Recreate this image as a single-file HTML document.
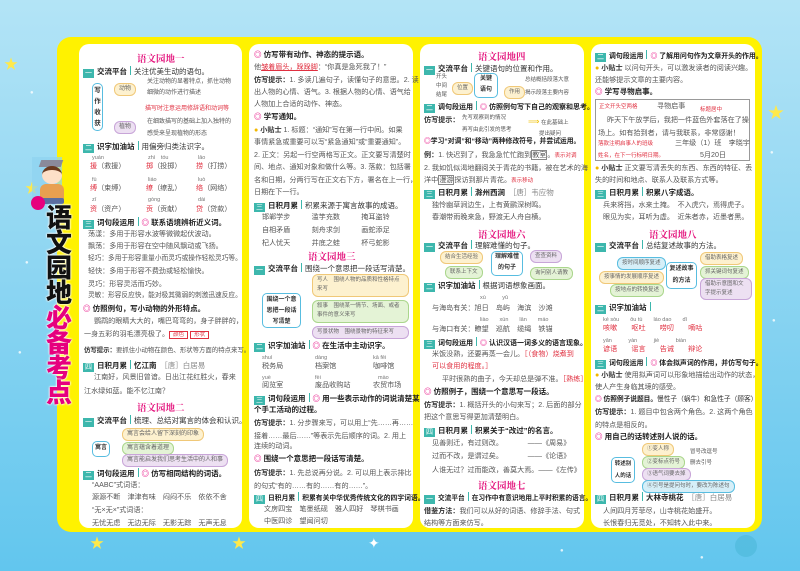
<!DOCTYPE html>
<html><head><meta charset="utf-8">
<style>
*{margin:0;padding:0;box-sizing:border-box}
body{width:800px;height:571px;overflow:hidden;position:relative;font-family:"Liberation Sans","Noto Sans CJK SC",sans-serif;background:linear-gradient(180deg,#b3e4f6 0%,#8fd6f2 45%,#62c6ee 100%)}
.frame{position:absolute;left:57px;top:37px;width:705px;height:495px;background:#fff200;border-radius:14px}
.col{position:absolute;top:44px;height:484px;background:#fff;border-radius:10px}
.l{position:absolute;white-space:nowrap;font-size:7.1px;line-height:10px;color:#555}
.h{position:absolute;white-space:nowrap;font-size:7.5px;line-height:10px;color:#333}
.h b{font-weight:bold;color:#222}
.h .n{display:inline-block;width:11px;height:9px;background:#3db7ad;color:#fff;font-size:7px;line-height:9px;text-align:center;margin-right:3px;vertical-align:-1px}
.h .s{display:inline-block;width:1px;height:9px;background:#3db7ad;margin:0 3px;vertical-align:-1px}
.t{position:absolute;font-family:"Noto Serif CJK SC","Liberation Serif",serif;font-weight:bold;font-size:9.5px;color:#e4147d;white-space:nowrap}
.c{color:#e6007e}
.r{color:#e03040}
.p{font-size:5.5px;color:#777}
.bx{position:absolute;border-radius:6px;font-size:6px;line-height:9px;color:#666;padding:1px 4px;white-space:nowrap}
.y{background:#fdf1cf;border:1px solid #f0c878}
.g{background:#e4f3d6;border:1px solid #aad68c}
.v{background:#ede0f2;border:1px solid #c8a5d8}
.u{background:#d6eff8;border:1px solid #58bde0}
.cb{position:absolute;border:1.5px solid #58bde0;border-radius:5px;background:#fff;font-size:7px;color:#333;text-align:center;font-weight:bold}
.bulb{color:#f3b800}
.big{position:absolute;left:44px;font-size:26px;line-height:25px;font-weight:900;width:30px;text-align:center;text-shadow:0 0 2px #fff,0 0 2px #fff,0 0 1px #fff}
.star{position:absolute;color:#ffe94a;font-size:14px}
.dot{position:absolute;color:#fff;opacity:.8;font-size:6px}
</style></head><body>
<span class="star" style="left:4px;top:54px">★</span>
<span class="star" style="left:25px;top:178px">★</span>
<span class="star" style="left:90px;top:533px">★</span>
<span class="star" style="left:232px;top:533px">★</span>
<span class="star" style="left:368px;top:535px;color:#fff">✦</span>
<span class="star" style="left:768px;top:99px;font-size:16px">★</span>
<span class="dot" style="left:30px;top:90px">●</span><span class="dot" style="left:25px;top:260px">●</span><span class="dot" style="left:18px;top:350px">●</span><span class="dot" style="left:770px;top:150px">●</span><span class="dot" style="left:772px;top:318px">●</span><span class="dot" style="left:560px;top:548px">●</span><span class="dot" style="left:700px;top:555px">●</span>
<div style="position:absolute;left:735px;top:535px;width:22px;height:22px;border-radius:50%;background:#4bb8d8;opacity:.6"></div>

<div class="frame"></div>
<div style="position:absolute;left:32px;top:157px;width:30px;height:48px;background:#8ed3f0;opacity:.7"></div>
<div style="position:absolute;left:40px;top:160px;width:22px;height:7px;background:#8a8a9a;transform:skewX(-20deg)"></div>
<div style="position:absolute;left:42px;top:166px;width:20px;height:18px;border-radius:50%;background:#fde0c8;border-top:4px solid #6b3a1e"></div>
<div style="position:absolute;left:40px;top:184px;width:24px;height:16px;border-radius:6px 6px 2px 2px;background:#e8a050"></div>
<div style="position:absolute;left:42px;top:198px;width:22px;height:6px;background:#5a6ea0;border-radius:2px"></div>
<div style="position:absolute;left:31px;top:196px;width:14px;height:14px;border-radius:50%;background:#e6007e"></div>
<div class="big" style="top:206px;color:#111">语<br>文<br>园<br>地<br><span style="color:#e6007e">必<br>备<br>考<br>点</span></div>

<div class="col" style="left:79px;width:163px"></div>
<div class="col" style="left:249px;width:164px"></div>
<div class="col" style="left:420px;width:164px"></div>
<div class="col" style="left:591px;width:164px"></div>

<!-- COLUMN 1 -->
<div class="t" style="left:137px;top:51px">语文园地一</div>
<div class="h" style="left:83px;top:66px"><span class="n">一</span><b>交流平台</b><span class="s"></span>关注优美生动的语句。</div>
<div class="cb" style="left:92px;top:83px;width:11px;height:48px;font-size:6.5px;line-height:11px;padding-top:1px">写<br>作<br>收<br>获</div>
<div class="bx y" style="left:114px;top:83px">动物</div>
<div class="bx v" style="left:114px;top:121px">植物</div>
<div class="l" style="left:147px;top:77px;font-size:6px">关注动物的显著特点，抓住动物</div>
<div class="l" style="left:147px;top:88px;font-size:6px">细微的动作进行描述</div>
<div class="l r" style="left:145px;top:104px;font-size:6px">描写时注意运用修辞语和动词等</div>
<div class="l" style="left:147px;top:117px;font-size:6px">在细致描写的基础上加入独特的</div>
<div class="l" style="left:147px;top:129px;font-size:6px">感受来呈现植物的形态</div>
<div class="h" style="left:83px;top:141px"><span class="n">二</span><b>识字加油站</b><span class="s"></span>用偏旁归类法识字。</div>
<div class="l p" style="left:92px;top:153px">yuán</div><div class="l p" style="left:148px;top:153px">zhì　tóu</div><div class="l p" style="left:198px;top:153px">lāo</div>
<div class="l" style="left:90px;top:161px"><span class="r">援</span>（救援）</div><div class="l" style="left:146px;top:161px"><span class="r">掷</span>（投掷）</div><div class="l" style="left:196px;top:161px"><span class="r">捞</span>（打捞）</div>
<div class="l p" style="left:92px;top:175px">fù</div><div class="l p" style="left:148px;top:175px">liáo</div><div class="l p" style="left:198px;top:175px">luò</div>
<div class="l" style="left:90px;top:183px"><span class="r">缚</span>（束缚）</div><div class="l" style="left:146px;top:183px"><span class="r">缭</span>（缭乱）</div><div class="l" style="left:196px;top:183px"><span class="r">络</span>（网络）</div>
<div class="l p" style="left:92px;top:195px">zī</div><div class="l p" style="left:148px;top:195px">gòng</div><div class="l p" style="left:198px;top:195px">dài</div>
<div class="l" style="left:90px;top:204px"><span class="r">资</span>（资产）</div><div class="l" style="left:146px;top:204px"><span class="r">贡</span>（贡献）</div><div class="l" style="left:196px;top:204px"><span class="r">贷</span>（贷款）</div>
<div class="h" style="left:83px;top:217px"><span class="n">三</span><b>词句段运用</b><span class="s"></span><b><span class="c">◎</span> 联系语境辨析近义词。</b></div>
<div class="l" style="left:88px;top:229px">荡漾：多用于形容水波等微微起伏波动。</div>
<div class="l" style="left:88px;top:241px">飘荡：多用于形容在空中随风飘动或飞扬。</div>
<div class="l" style="left:88px;top:254px;font-size:6.7px">轻巧：多用于形容重量小而灵巧或操作轻松灵巧等。</div>
<div class="l" style="left:88px;top:266px">轻快：多用于形容不费劲或轻松愉快。</div>
<div class="l" style="left:88px;top:279px">灵巧：形容灵活而巧妙。</div>
<div class="l" style="left:88px;top:291px;font-size:6.7px">灵敏：形容反应快，能对极其微弱的刺激迅速反应。</div>
<div class="h" style="left:83px;top:304px"><b><span class="c">◎</span> 仿照例句，写小动物的外形特点。</b></div>
<div class="l" style="left:94px;top:316px">鹦鹉的眼睛大大的，嘴巴弯弯的，身子胖胖的，</div>
<div class="l" style="left:84px;top:329px">一身五彩的羽毛漂亮极了。<span class="r" style="border:1px solid #e03040;font-size:5.5px;padding:0 3px">颜色</span> <span class="r" style="border:1px solid #e03040;font-size:5.5px;padding:0 3px">形状</span></div>
<div class="l" style="left:84px;top:346px;font-size:6.4px"><b style="color:#333">仿写提示：</b>要抓住小动物在颜色、形状等方面的特点来写。</div>
<div class="h" style="left:83px;top:360px"><span class="n">四</span><b>日积月累</b><span class="s"></span><b>忆江南</b>　<span style="color:#888">［唐］白居易</span></div>
<div class="l" style="left:94px;top:372px">江南好，风景旧曾谙。日出江花红胜火，春来</div>
<div class="l" style="left:84px;top:386px">江水绿如蓝。能不忆江南？</div>
<div class="t" style="left:137px;top:400px">语文园地二</div>
<div class="h" style="left:83px;top:415px"><span class="n">一</span><b>交流平台</b><span class="s"></span>梳理、总结对寓言的体会和认识。</div>
<div class="cb" style="left:92px;top:441px;width:18px;height:16px;font-size:6px;line-height:13px">寓言</div>
<div class="bx y" style="left:122px;top:428px">寓言会给人留下深刻的印象</div>
<div class="bx g" style="left:122px;top:442px">寓言蕴含着道理</div>
<div class="bx v" style="left:122px;top:454px">寓言能启发我们思考生活中的人和事</div>
<div class="h" style="left:83px;top:468px"><span class="n">二</span><b>词句段运用</b><span class="s"></span><b><span class="c">◎</span> 仿写相同结构的词语。</b></div>
<div class="l" style="left:92px;top:480px">“AABC”式词语：</div>
<div class="l" style="left:92px;top:492px">源源不断　津津有味　闷闷不乐　依依不舍</div>
<div class="l" style="left:92px;top:505px">“无×无×”式词语：</div>
<div class="l" style="left:92px;top:518px">无忧无虑　无边无际　无影无踪　无声无息</div>

<!-- COLUMN 2 -->
<div class="h" style="left:254px;top:50px"><b><span class="c">◎</span> 仿写带有动作、神态的提示语。</b></div>
<div class="l" style="left:254px;top:62px">他<span class="r" style="text-decoration:underline">皱着眉头，跺跺脚</span>：“你真是急死我了！”</div>
<div class="l" style="left:254px;top:75px"><b style="color:#333">仿写提示：</b>1. 多读几遍句子，读懂句子的意思。2. 读</div>
<div class="l" style="left:254px;top:87px">出人物的心情、语气。3. 根据人物的心情、语气给</div>
<div class="l" style="left:254px;top:99px">人物加上合适的动作、神态。</div>
<div class="h" style="left:254px;top:112px"><b><span class="c">◎</span> 学写通知。</b></div>
<div class="l" style="left:254px;top:125px"><span class="bulb">●</span> <b style="color:#333">小贴士</b> 1. 标题：“通知”写在第一行中间。如果</div>
<div class="l" style="left:254px;top:137px">事情紧急或重要可以写“紧急通知”或“重要通知”。</div>
<div class="l" style="left:254px;top:150px">2. 正文：另起一行空两格写正文。正文要写清楚时</div>
<div class="l" style="left:254px;top:162px">间、地点、通知对象和做什么等。3. 落款：包括署</div>
<div class="l" style="left:254px;top:175px">名和日期，分两行写在正文右下方，署名在上一行，</div>
<div class="l" style="left:254px;top:187px">日期在下一行。</div>
<div class="h" style="left:254px;top:200px"><span class="n">三</span><b>日积月累</b><span class="s"></span>积累来源于寓言故事的成语。</div>
<div class="l" style="left:262px;top:212px">邯郸学步　　　滥竽充数　　　掩耳盗铃</div>
<div class="l" style="left:262px;top:225px">自相矛盾　　　刻舟求剑　　　画蛇添足</div>
<div class="l" style="left:262px;top:238px">杞人忧天　　　井底之蛙　　　杯弓蛇影</div>
<div class="t" style="left:308px;top:249px">语文园地三</div>
<div class="h" style="left:254px;top:263px"><span class="n">一</span><b>交流平台</b><span class="s"></span>围绕一个意思把一段话写清楚。</div>
<div class="cb" style="left:262px;top:293px;width:39px;height:35px;font-size:6px;line-height:11px;padding-top:1px">围绕一个意<br>思把一段话<br>写清楚</div>
<div class="bx y" style="left:312px;top:274px;width:97px;height:23px;white-space:normal;font-size:5.5px">写人　围绕人物的品质和性格特点来写</div>
<div class="bx g" style="left:312px;top:300px;width:97px;height:23px;white-space:normal;font-size:5.5px">叙事　围绕某一情节、场面、或者事件的意义来写</div>
<div class="bx v" style="left:312px;top:326px;width:97px;font-size:5.5px">写景状物　围绕景物的特征来写</div>
<div class="h" style="left:254px;top:340px"><span class="n">二</span><b>识字加油站</b><span class="s"></span><b><span class="c">◎</span> 在生活中主动识字。</b></div>
<div class="l p" style="left:262px;top:353px">shuì</div><div class="l p" style="left:315px;top:353px">dàng</div><div class="l p" style="left:373px;top:353px">kā fēi</div>
<div class="l" style="left:262px;top:361px">税务局</div><div class="l" style="left:315px;top:361px">档案馆</div><div class="l" style="left:373px;top:361px">咖啡馆</div>
<div class="l p" style="left:262px;top:373px">yuè</div><div class="l p" style="left:315px;top:373px">fèi</div><div class="l p" style="left:378px;top:373px">mào</div>
<div class="l" style="left:262px;top:380px">阅览室</div><div class="l" style="left:315px;top:380px">废品收购站</div><div class="l" style="left:373px;top:380px">农贸市场</div>
<div class="h" style="left:254px;top:393px"><span class="n">三</span><b>词句段运用</b><span class="s"></span><b><span class="c">◎</span> 用一些表示动作的词说清楚某</b></div>
<div class="h" style="left:254px;top:405px"><b>个手工活动的过程。</b></div>
<div class="l" style="left:254px;top:418px"><b style="color:#333">仿写提示：</b>1. 分步骤来写，可以用上“先……再……</div>
<div class="l" style="left:254px;top:431px">接着……最后……”等表示先后顺序的词。2. 用上</div>
<div class="l" style="left:254px;top:441px">连续的动词。</div>
<div class="h" style="left:254px;top:454px"><b><span class="c">◎</span> 围绕一个意思把一段话写清楚。</b></div>
<div class="l" style="left:254px;top:468px"><b style="color:#333">仿写提示：</b>1. 先总说再分说。2. 可以用上表示排比</div>
<div class="l" style="left:254px;top:481px">的句式“有的……有的……有的……”。</div>
<div class="h" style="left:254px;top:492px;font-size:6.8px"><span class="n">四</span><b>日积月累</b><span class="s"></span><b>积累有关中华优秀传统文化的四字词语。</b></div>
<div class="l" style="left:264px;top:504px">文房四宝　笔墨纸砚　雅人四好　琴棋书画</div>
<div class="l" style="left:264px;top:516px">中医四诊　望闻问切</div>

<!-- COLUMN 3 -->
<div class="t" style="left:478px;top:49px">语文园地四</div>
<div class="h" style="left:424px;top:63px"><span class="n">一</span><b>交流平台</b><span class="s"></span>关键语句的位置和作用。</div>
<div class="l" style="left:436px;top:73px;font-size:5.5px;line-height:9px">开头<br>中间<br>结尾</div>
<div class="bx y" style="left:452px;top:82px;font-size:5.5px">位置</div>
<div class="cb" style="left:474px;top:73px;width:24px;height:25px;font-size:6px;line-height:11px">关键<br>语句</div>
<div class="bx y" style="left:504px;top:86px;font-size:5.5px">作用</div>
<div class="l" style="left:525px;top:75px;font-size:5.5px">总结概括段落大意</div>
<div class="l" style="left:525px;top:88px;font-size:5.5px">揭示段落主要内容</div>
<div class="h" style="left:424px;top:101px;font-size:7px"><span class="n">二</span><b>调句段运用</b><span class="s"></span><b><span class="c">◎</span> 仿照例句写下自己的观察和思考。</b></div>
<div class="l" style="left:424px;top:115px"><b style="color:#333">仿写提示：</b></div>
<div class="l" style="left:462px;top:113px;font-size:5.5px">先写观察到的情况</div>
<div class="l" style="left:462px;top:125px;font-size:5.5px">再写由此引发的思考</div>
<div class="l" style="left:528px;top:116px;font-size:5.5px;line-height:11px"><span style="color:#f0c000;font-size:8px">⟹</span> 在此基础上<br>　　提出疑问</div>
<div class="h" style="left:424px;top:137px;font-size:6.8px"><b><span class="c">◎</span>学习“对调”和“移动”两种修改符号，并尝试运用。</b></div>
<div class="l" style="left:424px;top:150px"><b style="color:#333">例：</b>1. 快迟到了，我急急忙忙跑到<span style="border:1px solid #888">教室</span>。<span class="r" style="font-size:5.5px">表示对调</span></div>
<div class="l" style="left:424px;top:163px">2. 我如饥似渴地翻阅关于青花的书籍，被在艺术的海</div>
<div class="l" style="left:424px;top:175px">洋中<span style="border:1px solid #888">漫游</span>探访到那片青花。<span class="r" style="font-size:5.5px">表示移动</span></div>
<div class="h" style="left:424px;top:187px"><span class="n">三</span><b>日积月累</b><span class="s"></span><b>滁州西涧</b>　<span style="color:#888">［唐］韦应物</span></div>
<div class="l" style="left:432px;top:200px">独怜幽草涧边生，上有黄鹂深树鸣。</div>
<div class="l" style="left:432px;top:212px">春潮带雨晚来急，野渡无人舟自横。</div>
<div class="t" style="left:478px;top:227px">语文园地六</div>
<div class="h" style="left:424px;top:240px"><span class="n">一</span><b>交流平台</b><span class="s"></span>理解难懂的句子。</div>
<div class="bx y" style="left:440px;top:251px;font-size:5.5px">结合生活经验</div>
<div class="bx g" style="left:445px;top:266px;font-size:5.5px">联系上下文</div>
<div class="cb" style="left:491px;top:251px;width:32px;height:25px;font-size:6px;line-height:11px">理解难懂<br>的句子</div>
<div class="bx v" style="left:530px;top:250px;font-size:5.5px">查查资料</div>
<div class="bx g" style="left:530px;top:267px;font-size:5.5px">询问别人请教</div>
<div class="h" style="left:424px;top:280px"><span class="n">二</span><b>识字加油站</b><span class="s"></span>根据词语想象画面。</div>
<div class="l p" style="left:480px;top:293px">xù　　　yǔ</div>
<div class="l" style="left:432px;top:303px">与海岛有关：旭日　岛屿　海滨　沙滩</div>
<div class="l p" style="left:480px;top:315px">liào　　xún　　lǎn　　máo</div>
<div class="l" style="left:432px;top:324px">与海口有关：瞭望　巡航　缆绳　铁锚</div>
<div class="h" style="left:424px;top:337px;font-size:7px"><span class="n">三</span><b>词句段运用</b><span class="s"></span><b><span class="c">◎</span> 认识汉语一词多义的语言现象。</b></div>
<div class="l" style="left:432px;top:349px">米饭没熟，还要再蒸一会儿。<span class="r">［（食物）烧煮到</span></div>
<div class="l r" style="left:432px;top:361px">可以食用的程度。］</div>
<div class="l" style="left:442px;top:374px">平时很熟的曲子，今天却总是弹不准。<span class="r">［熟练］</span></div>
<div class="h" style="left:424px;top:387px"><b><span class="c">◎</span> 仿照例子，围绕一个意思写一段话。</b></div>
<div class="l" style="left:424px;top:400px"><b style="color:#333">仿写提示：</b>1. 概括开头的小句来写；2. 后面的部分</div>
<div class="l" style="left:424px;top:412px">把这个意思写得更加清楚明白。</div>
<div class="h" style="left:424px;top:425px"><span class="n">四</span><b>日积月累</b><span class="s"></span><b>积累关于“改过”的名言。</b></div>
<div class="l" style="left:432px;top:438px">见善则迁，有过则改。　　　　——《周易》</div>
<div class="l" style="left:432px;top:451px">过而不改，是谓过矣。　　　　——《论语》</div>
<div class="l" style="left:432px;top:465px">人谁无过？过而能改，善莫大焉。——《左传》</div>
<div class="t" style="left:478px;top:478px">语文园地七</div>
<div class="h" style="left:424px;top:492px;font-size:6.7px"><span class="n">一</span><b>交流平台</b><span class="s"></span><b>在习作中有意识地用上平时积累的语言。</b></div>
<div class="l" style="left:424px;top:506px"><b style="color:#333">借鉴方法：</b>我们可以从好的词语、修辞手法、句式</div>
<div class="l" style="left:424px;top:518px">结构等方面来仿写。</div>

<!-- COLUMN 4 -->
<div class="h" style="left:595px;top:50px;font-size:6.9px"><span class="n">二</span><b>调句段运用</b><span class="s"></span><b><span class="c">◎</span> 了解用问句作为文章开头的作用。</b></div>
<div class="l" style="left:595px;top:63px"><span class="bulb">●</span> <b style="color:#333">小贴士</b> 以问句开头，可以激发读者的阅读兴趣。</div>
<div class="l" style="left:595px;top:75px">还能够提示文章的主要内容。</div>
<div class="h" style="left:595px;top:87px"><b><span class="c">◎</span> 学写寻物启事。</b></div>
<div style="position:absolute;left:595px;top:99px;width:155px;height:62px;border:1.5px solid #999"></div>
<div class="l r" style="left:599px;top:102px;font-size:5.5px">正文开头空两格</div>
<div class="l" style="left:657px;top:101px">寻物启事</div>
<div class="l r" style="left:700px;top:105px;font-size:5.5px">标题居中</div>
<div class="l" style="left:607px;top:115px">昨天下午放学后，我把一件蓝色外套落在了操</div>
<div class="l" style="left:598px;top:128px">场上。如有拾到者，请与我联系，非常感谢！</div>
<div class="l r" style="left:598px;top:139px;font-size:5.5px">落款注明启事人的班级</div>
<div class="l r" style="left:598px;top:151px;font-size:5.5px">姓名，在下一行标明日期。</div>
<div class="l" style="left:675px;top:138px">三年级（1）班　李晓宇</div>
<div class="l" style="left:700px;top:150px">5月20日</div>
<div class="l" style="left:595px;top:163px"><span class="bulb">●</span> <b style="color:#333">小贴士</b> 正文要写清丢失的东西、东西的特征、丢</div>
<div class="l" style="left:595px;top:175px">失的时间和地点、联系人及联系方式等。</div>
<div class="h" style="left:595px;top:187px"><span class="n">三</span><b>日积月累</b><span class="s"></span><b>积累八字成语。</b></div>
<div class="l" style="left:603px;top:200px">兵来将挡，水来土掩。　不入虎穴，焉得虎子。</div>
<div class="l" style="left:603px;top:212px">眼见为实，耳听为虚。　近朱者赤，近墨者黑。</div>
<div class="t" style="left:649px;top:227px">语文园地八</div>
<div class="h" style="left:595px;top:240px"><span class="n">一</span><b>交流平台</b><span class="s"></span>总结复述故事的方法。</div>
<div class="bx u" style="left:617px;top:257px;font-size:5.5px">按时间顺序复述</div>
<div class="bx y" style="left:599px;top:271px;font-size:5.5px">按事情的发展顺序复述</div>
<div class="bx g" style="left:610px;top:284px;font-size:5.5px">按地点的转换复述</div>
<div class="cb" style="left:666px;top:262px;width:31px;height:27px;font-size:6px;line-height:12px">复述故事<br>的方法</div>
<div class="bx y" style="left:700px;top:252px;font-size:5.5px">借助表格复述</div>
<div class="bx g" style="left:700px;top:266px;font-size:5.5px">抓关键词句复述</div>
<div class="bx v" style="left:700px;top:278px;width:52px;white-space:normal;font-size:5.5px">借助示意图和文字提示复述</div>
<div class="h" style="left:595px;top:302px"><span class="n">二</span><b>识字加油站</b><span class="s"></span></div>
<div class="l p" style="left:603px;top:315px">ké sòu　　ǒu tù　　láo dao　　dī</div>
<div class="l r" style="left:603px;top:323px">咳嗽　　呕吐　　唠叨　　嘀咕</div>
<div class="l p" style="left:603px;top:336px">yǎn　　　yàn　　　jiè　　　biàn</div>
<div class="l r" style="left:603px;top:344px">谚语　　谣言　　告诫　　辩论</div>
<div class="h" style="left:595px;top:357px;font-size:6.9px"><span class="n">三</span><b>词句段运用</b><span class="s"></span><b><span class="c">◎</span> 体会拟声词的作用，并仿写句子。</b></div>
<div class="l" style="left:595px;top:370px"><span class="bulb">●</span> <b style="color:#333">小贴士</b> 使用拟声词可以形象地描绘出动作的状态，</div>
<div class="l" style="left:595px;top:382px">使人产生身临其境的感受。</div>
<div class="h" style="left:595px;top:395px;font-size:6.7px"><b><span class="c">◎</span> 仿照例子说题目。</b>慢性子（蜗牛）和急性子（顾客）</div>
<div class="l" style="left:595px;top:407px"><b style="color:#333">仿写提示：</b>1. 题目中包含两个角色。2. 这两个角色</div>
<div class="l" style="left:595px;top:420px">的特点是相反的。</div>
<div class="h" style="left:595px;top:432px"><b><span class="c">◎</span> 用自己的话转述别人说的话。</b></div>
<div class="cb" style="left:611px;top:457px;width:24px;height:26px;font-size:5.5px;line-height:12px">转述别<br>人的话</div>
<div class="bx y" style="left:642px;top:443px;font-size:5.5px">①变人称</div>
<div class="bx g" style="left:642px;top:456px;font-size:5.5px">②变标点符号</div>
<div class="bx v" style="left:642px;top:468px;font-size:5.5px">③语气词要去掉</div>
<div class="bx u" style="left:642px;top:480px;font-size:5.5px">④引号是提问句时，要改为陈述句</div>
<div class="l" style="left:690px;top:447px;font-size:5.5px">冒号改逗号</div>
<div class="l" style="left:690px;top:458px;font-size:5.5px">删去引号</div>
<div class="h" style="left:595px;top:492px"><span class="n">四</span><b>日积月累</b><span class="s"></span><b>大林寺桃花</b>　<span style="color:#888">［唐］白居易</span></div>
<div class="l" style="left:603px;top:506px">人间四月芳菲尽，山寺桃花始盛开。</div>
<div class="l" style="left:603px;top:518px">长恨春归无觅处，不知转入此中来。</div>
</body></html>
